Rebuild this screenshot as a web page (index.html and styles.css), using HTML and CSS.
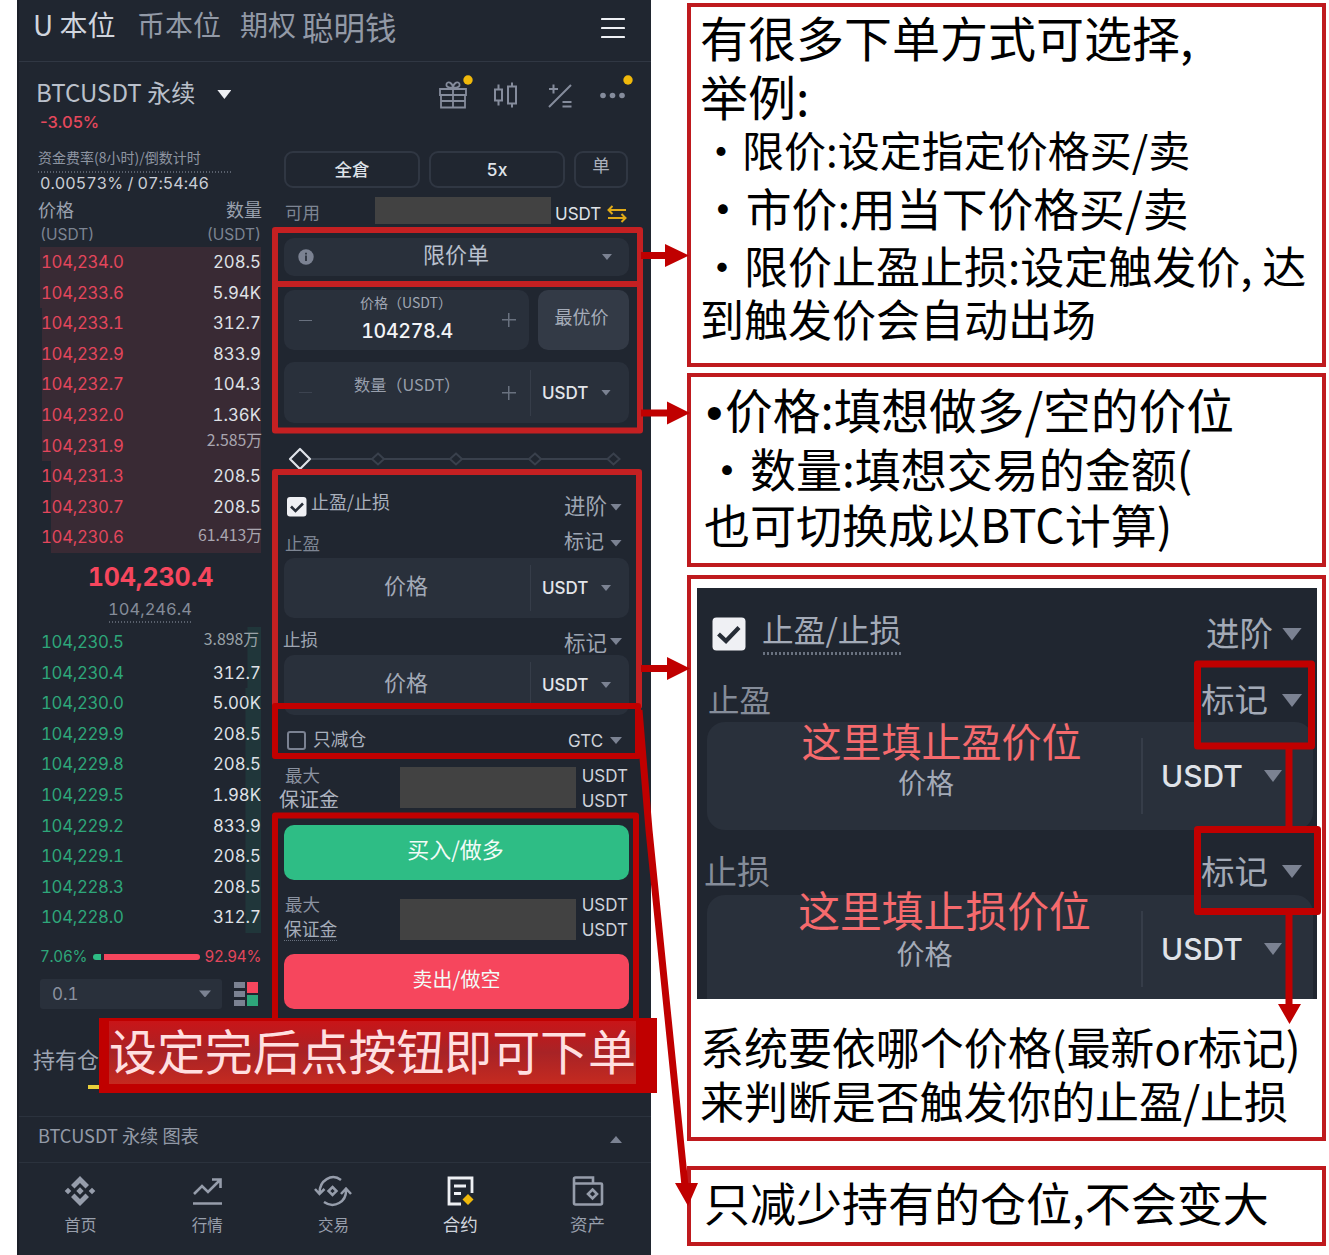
FILE: index.html
```html
<!DOCTYPE html>
<html lang="zh-CN">
<head>
<meta charset="utf-8">
<title>BTCUSDT 永续</title>
<link rel="stylesheet" href="styles.css">
</head>
<body>
<div class="page">
  <main class="phone">
    <header class="tabs">
      <span class="tab tab-on">U 本位</span><span class="tab tab-coin">币本位</span><span class="tab tab-opt">期权</span><span class="tab tab-smart">聪明钱</span>
      <svg class="menu" width="24" height="22" viewBox="0 0 24 22"><path d="M1 2h22M1 11h22M1 20h22" stroke="#eef0f4" stroke-width="2.2" stroke-linecap="round"/></svg>
    </header>

    <section class="pair">
      <div>
        <div class="pair-name">BTCUSDT 永续<i class="caret caret-white"></i></div>
        <div class="pair-change">-3.05%</div>
      </div>
      <div class="tools">
        <svg width="36" height="36" viewBox="0 0 36 36" fill="none" stroke="#858c9c" stroke-width="1.8"><path d="M4 15h26v6H4zM5 21v12.500h24V21M5 27h24M17 15v18M17 14c-6 0-7-2-6.500-4 1-3 6-2 6.500 4zM17 14c6 0 7-2 6.500-4-1-3-6-2-6.500 4z"/><circle cx="32" cy="6" r="4.700" fill="#f0b90b" stroke="none"/></svg>
        <svg width="26" height="28" viewBox="0 0 26 28" fill="none" stroke="#858c9c" stroke-width="2"><path d="M2 8.500h7v11H2zM5.500 3.500v5M5.500 19.500v5M15 5.500h8v17h-8zM19 1.500v4M19 22.500v4"/></svg>
        <svg width="26" height="26" viewBox="0 0 26 26" fill="none" stroke="#858c9c" stroke-width="2"><path d="M2 24 24 2M2 6h9M6.500 1.500v9M15.500 19h9M15.500 23.500h9"/></svg>
        <svg width="36" height="36" viewBox="0 0 36 36" fill="#858c9c"><circle cx="4" cy="21.500" r="2.800"/><circle cx="13.500" cy="21.500" r="2.800"/><circle cx="23" cy="21.500" r="2.800"/><circle cx="29" cy="6" r="4.700" fill="#f0b90b"/></svg>
      </div>
    </section>

    <div class="trade">
      <section class="book">
        <div class="funding">资金费率(8小时)/倒数计时</div>
        <div class="rate">0.00573% / 07:54:46</div>
        <div class="row head"><span>价格</span><span>数量</span></div>
        <div class="row unit"><span>(USDT)</span><span>(USDT)</span></div>
        <div class="asks">
          <div class="row level"><span>104,234.0</span><b>208.5</b></div>
          <div class="row level"><span>104,233.6</span><b>5.94K</b></div>
          <div class="row level d2"><span>104,233.1</span><b>312.7</b></div>
          <div class="row level d2"><span>104,232.9</span><b>833.9</b></div>
          <div class="row level d2"><span>104,232.7</span><b>104.3</b></div>
          <div class="row level d2"><span>104,232.0</span><b>1.36K</b></div>
          <div class="row level d2"><span>104,231.9</span><b class="wan">2.585万</b></div>
          <div class="row level d3"><span>104,231.3</span><b>208.5</b></div>
          <div class="row level d3"><span>104,230.7</span><b>208.5</b></div>
          <div class="row level d3"><span>104,230.6</span><b class="wan wan-low">61.413万</b></div>
        </div>
        <div class="last">104,230.4</div>
        <div class="mark"><span>104,246.4</span></div>
        <div class="bids">
          <div class="row level d4"><span>104,230.5</span><b class="wan wan-bid">3.898万</b></div>
          <div class="row level d4"><span>104,230.4</span><b>312.7</b></div>
          <div class="row level"><span>104,230.0</span><b>5.00K</b></div>
          <div class="row level"><span>104,229.9</span><b>208.5</b></div>
          <div class="row level"><span>104,229.8</span><b>208.5</b></div>
          <div class="row level"><span>104,229.5</span><b>1.98K</b></div>
          <div class="row level"><span>104,229.2</span><b>833.9</b></div>
          <div class="row level"><span>104,229.1</span><b>208.5</b></div>
          <div class="row level"><span>104,228.3</span><b>208.5</b></div>
          <div class="row level"><span>104,228.0</span><b>312.7</b></div>
        </div>
        <div class="ratio"><span class="up">7.06%</span><i class="bar-up"></i><i class="bar-down"></i><span class="down">92.94%</span></div>
        <div class="step">
          <div class="step-box"><span>0.1</span><i class="caret"></i></div>
          <svg width="24" height="24" viewBox="0 0 24 24"><path d="M0 0h11v6H0zM0 9h11v6H0zM0 18h11v6H0z" fill="#7b8292"/><path d="M13 0h11v11H13z" fill="#f6465d"/><path d="M13 13h11v11H13z" fill="#2ea67a"/></svg>
        </div>
      </section>

      <section class="form">
        <div class="modes"><span class="mode">全倉</span><span class="mode">5x</span><span class="mode mode-one">单</span></div>
        <div class="avail"><span class="lbl">可用</span><i class="mask"></i><span class="cur">USDT</span>
          <svg width="20" height="18" viewBox="0 0 20 18" fill="none" stroke="#e0aa17" stroke-width="2"><path d="M19 5H1.500M5.500 1 1.500 5l4 4M1 13h17.500M14.500 9l4 4-4 4"/></svg></div>
        <div class="field type"><svg width="16" height="16" viewBox="0 0 16 16"><circle cx="8" cy="8" r="7.700" fill="#7b8292"/><path d="M8 6.500v5.500M8 3.800v1.600" stroke="#2b313c" stroke-width="1.800"/></svg><span>限价单</span><i class="caret small"></i></div>
        <div class="price-row">
          <div class="field price"><i class="minus"></i><div class="price-in"><span class="price-lbl">价格（USDT）</span><span class="price-val">104278.4</span></div><i class="plus"></i></div>
          <div class="field best">最优价</div>
        </div>
        <div class="field qty"><i class="minus dim"></i><span class="qty-lbl">数量（USDT）</span><i class="plus"></i><div class="unit-pick"><span>USDT</span><i class="caret small"></i></div></div>
        <svg class="slider" width="345" height="72" viewBox="0 0 345 72" fill="#202630" stroke="#39404c" stroke-width="2"><path d="M16 36h313"/><path d="m94 30.500 6 5.500-6 5.500-6-5.500zM172 30.500l6 5.500-6 5.500-6-5.500zM251 30.500l6 5.500-6 5.500-6-5.500zM329.500 30.500l6 5.500-6 5.500-6-5.500z"/><path d="m16 26 10 10-10 10L6 36z" stroke="#dfe2e8" stroke-width="2.200" stroke-linejoin="round"/></svg>
        <div class="opt opt-tpsl">
          <svg width="20" height="20" viewBox="0 0 20 20"><rect width="19.500" height="19.500" rx="3" fill="#eff0f4"/><path d="m4 9.500 4.500 4.500L16 6.500" fill="none" stroke="#262c36" stroke-width="2.600"/></svg>
          <span class="opt-name">止盈/止损</span><span class="pick">进阶</span><i class="caret"></i></div>
        <div class="opt opt-tp"><span class="lbl">止盈</span><span class="pick pick-tp">标记</span><i class="caret"></i></div>
        <div class="field trigger"><span>价格</span><div class="unit-pick"><span>USDT</span><i class="caret small"></i></div></div>
        <div class="opt opt-sl"><span class="lbl lbl-sl">止损</span><span class="pick">标记</span><i class="caret"></i></div>
        <div class="field trigger"><span>价格</span><div class="unit-pick"><span>USDT</span><i class="caret small"></i></div></div>
        <div class="opt opt-reduce">
          <i class="box"></i><span class="opt-name">只减仓</span><span class="gtc">GTC</span><i class="caret"></i></div>
        <div class="limits"><div class="names"><span>最大</span><span class="margin margin-big">保证金</span></div><i class="mask mask-tall"></i><div class="units"><span>USDT</span><span>USDT</span></div></div>
        <div class="action buy">买入/做多</div>
        <div class="limits limits-sell"><div class="names"><span>最大</span><span class="margin">保证金</span></div><i class="mask mask-tall"></i><div class="units"><span>USDT</span><span>USDT</span></div></div>
        <div class="action sell">卖出/做空</div>
      </section>
    </div>

    <div class="positions"><span>持有仓</span><i></i></div>
    <div class="chart-bar"><span>BTCUSDT 永续 图表</span><i class="caret caret-up"></i></div>
    <nav class="nav">
      <div class="nav-item"><svg width="34" height="34" viewBox="0 0 34 34" fill="#969dab"><path d="m17 2 9 9-3.500 3.500-5.500-5.500-5.500 5.500L8 11zM17 32l9-9-3.500-3.500-5.500 5.500-5.500-5.500L8 23zM17 13.300l3.700 3.700-3.700 3.700-3.700-3.700zM5 13.700 8.300 17 5 20.300 1.700 17zM29 13.700l3.300 3.300-3.300 3.300-3.300-3.300z"/></svg><span>首页</span></div>
      <div class="nav-item"><svg width="34" height="34" viewBox="0 0 34 34" fill="none" stroke="#969dab" stroke-width="2.600"><path d="m4 20 8-8 6 6L30 6M22 5.500h8.500V14M3 29.500h29"/></svg><span class="s15">行情</span></div>
      <div class="nav-item"><svg width="38" height="34" viewBox="0 0 38 34" fill="none" stroke="#969dab" stroke-width="2.500"><path d="M27 6C18-1 5 6 5.500 20M1 15l4.500 5 5-5M10 28c10 7 23 0 22-13M27 20l5-5.500 5 5.500M18.500 13l4 4-4 4-4-4z"/></svg><span class="s15">交易</span></div>
      <div class="nav-item"><svg width="34" height="34" viewBox="0 0 34 34" fill="none" stroke="#eef0f4" stroke-width="2.800"><path d="M29 19V4H6v26h12M11 12h12M11 19.500h7"/><path d="m25 20 5.500 5.500L25 31l-5.500-5.500z" fill="#f0b90b" stroke="none"/></svg><span class="s17 on">合约</span></div>
      <div class="nav-item"><svg width="34" height="34" viewBox="0 0 34 34" fill="none" stroke="#969dab" stroke-width="2.600"><path d="M3 11V5q0-1.500 1.500-1.500H22V9M3 9.500h27q1 0 1 1V29q0 1.500-1.500 1.500h-25Q3 30.500 3 29zM21.500 15.500l4.500 4.500-4.500 4.500L17 20z"/></svg><span class="s17">资产</span></div>
    </nav>
  </main>

  <aside class="notes">
    <section class="note note-type">
      <p class="l1">有很多下单方式可选择,</p><p class="l2">举例:</p><p class="l3">・限价:设定指定价格买/卖</p><p class="l4">・市价:用当下价格买/卖</p><p class="l5">・限价止盈止损:设定触发价, 达</p><p class="l6">到触发价会自动出场</p>
    </section>
    <section class="note note-price">
      <p class="p1"><span>•</span>价格:填想做多/空的价位</p><p class="p2">・数量:填想交易的金额(</p><p class="p3">也可切换成以BTC计算)</p>
    </section>
    <section class="note note-tpsl">
      <div class="shot">
        <div class="shot-head">
          <svg width="34" height="34" viewBox="0 0 34 34"><rect x=".5" y=".5" width="33" height="33" rx="4" fill="#eff0f4"/><path d="m6.500 17 7.500 7L27 10.500" fill="none" stroke="#262c36" stroke-width="4.200"/></svg>
          <span class="shot-title">止盈/止损</span><span class="shot-pick">进阶</span><i class="caret big"></i></div>
        <div class="shot-line"><span>止盈</span><span class="shot-pick">标记</span><i class="caret big"></i></div>
        <div class="shot-field"><div class="shot-in"><em>这里填止盈价位</em><span>价格</span></div><div class="shot-unit"><span>USDT</span><i class="caret mid"></i></div></div>
        <div class="shot-line shot-line-sl"><span>止损</span><span class="shot-pick">标记</span><i class="caret big"></i></div>
        <div class="shot-field shot-cut"><div class="shot-in"><em>这里填止损价位</em><span>价格</span></div><div class="shot-unit"><span>USDT</span><i class="caret mid"></i></div></div>
      </div>
      <p class="t1">系统要依哪个价格(最新or标记)</p><p class="t2">来判断是否触发你的止盈/止损</p>
    </section>
    <section class="note note-reduce"><p>只减少持有的仓位,不会变大</p></section>
  </aside>

  <svg class="marks" width="1329" height="1255" viewBox="0 0 1329 1255" fill="none" stroke-linejoin="round">
    <g stroke="#c42022" stroke-width="6"><path d="M275 230h365v54H275z"/><path d="M275 284h365v146.500H275z"/><path d="M275 472h364v234H275z"/></g>
    <g stroke="#c00000" stroke-width="6"><path d="M275 706h363v50H275z"/><path d="M275 815.500h361V1021H275z"/></g>
    <g stroke="#c00000" stroke-width="7"><path d="M641 255.500h26M641 413h26M641 668.500h26M639 710l10 120 36 356" /><path d="M1197.500 664h114v82h-114z"/><path d="M1197.500 829.500h120v82h-120z"/><path d="M1289 749v80M1289 912v94"/></g>
    <g fill="#c00000"><path d="M665 244l24 11.500-24 11.500zM667 401.500l23 11.500-23 11.500zM667 657l23 11.500-23 11.500zM675 1183h23l-10 23zM1278 1004h23l-11.500 20z"/></g>
  </svg>
  <div class="banner"><span>设定完后点按钮即可下单</span></div>
</div>
</body>
</html>
```
FILE: styles.css
```css
* { box-sizing: border-box; }
body { margin: 0; background: #fff; }
p { margin: 0; }
i, em { font-style: normal; }
b { font-weight: 400; }
svg { display: block; flex: none; }

.page {
  position: relative;
  display: flex;
  width: 1329px;
  height: 1255px;
  overflow: hidden;
  padding-left: 17px;
  white-space: nowrap;
  font-family: "Noto Sans CJK SC", sans-serif;
  color: #b4bac6;
}
.phone { width: 634px; height: 1255px; background: #202630; flex: none; border-left: 2px solid #1a1f28; display: flex; flex-direction: column; }

.caret { display: block; flex: none; width: 12px; height: 7px; background: #7b8292; clip-path: polygon(0 0, 100% 0, 50% 100%); }
.caret.small { width: 10px; height: 6px; }
.caret.mid { width: 18px; height: 12px; }
.caret.big { width: 20px; height: 13px; }
.caret-white { width: 14px; height: 9px; background: #eef0f4; }
.caret-up { clip-path: polygon(50% 0, 100% 100%, 0 100%); }

/* top tabs */
.tabs { display: flex; height: 62px; padding-left: 14px; border-bottom: 1px solid #303743; line-height: 49px; color: #9299a6; flex: none; }
.tab-on { width: 104px; font-size: 28px; color: #d0d5de; }
.tab-coin { width: 103px; font-size: 28px; }
.tab-opt { width: 62px; font-size: 28px; }
.tab-smart { width: 299px; font-size: 31.5px; line-height: 53px; }
.menu { margin-top: 17px; }

/* pair line */
.pair { display: flex; justify-content: space-between; height: 83px; padding: 12px 25px 0 17px; flex: none; }
.pair-name { display: flex; align-items: center; height: 34px; font-size: 24.1px; color: #bac0cb; }
.pair-name .caret { margin-left: 22px; margin-top: 7px; }
.pair-change { height: 26px; padding-left: 4px; font: 500 16.5px/28px Inter, sans-serif; color: #e5485c; }
.tools { display: flex; height: 36px; }
.tools svg { overflow: visible; }
.tools svg:nth-child(1) { margin-right: 21px; }
.tools svg:nth-child(2) { margin: 7px 28px 0 0; }
.tools svg:nth-child(3) { margin: 9px 26px 0 0; }
.tools svg:nth-child(4) { margin-right: -9px; }

.trade { display: flex; height: 865px; padding-left: 19px; flex: none; }

/* order book */
.book { width: 246px; padding-right: 22px; font-variant-numeric: tabular-nums; }
.funding { height: 28px; width: 194px; font-size: 14px; line-height: 24px; color: #8e95a2; background: radial-gradient(circle, #59606c 45%, transparent 50%) 2px 26px / 3px 2px repeat-x; }
.rate { height: 20px; padding-left: 2px; font-family: Inter, sans-serif; font-size: 16.2px; line-height: 20px; color: #c9cdd5; letter-spacing: -.02px; }
.row { display: flex; justify-content: space-between; }
.head { height: 34px; line-height: 33px; font-size: 18px; color: #9aa1ae; }
.unit { height: 20px; padding: 0 1px 0 2px; font-family: Inter, sans-serif; font-size: 15.5px; line-height: 16px; color: #7c8492; }
.level { height: 30.6px; margin: 0 1px 0 2px; padding: 0 1px; font-family: Inter, sans-serif; font-size: 16.8px; line-height: 30.6px; color: #2ea67a; }
.level > span { letter-spacing: -.3px; }
.level b { color: #dfe1e6; }
.level b:not(.wan) { margin-right: -1px; }
.asks .level { color: #e3465c; background: #392a34; }
.asks .d2 { background: linear-gradient(#392a34 0 0) 2px 0 no-repeat; }
.asks .d3 { background: linear-gradient(#392a34 0 0) 11px 0 no-repeat; }
.level .wan { font-family: "Noto Sans CJK SC", sans-serif; font-size: 15.8px; line-height: 17px; color: #a9a6b0; margin-right: -2px; }
.level .wan-low { padding-top: 4px; }
.level .wan-bid { margin-right: 1px; padding-top: 3px; color: #9aa3a9; }
.last { height: 50px; font-family: Inter, sans-serif; font-size: 25px; font-weight: 700; line-height: 49px; letter-spacing: -.1px; padding-left: 1px; text-align: center; color: #f6465d; }
.mark { height: 24px; text-align: center; font-family: Inter, sans-serif; font-size: 16.5px; line-height: 13px; color: #858c99; }
.mark span { display: inline-block; height: 20px; background: radial-gradient(circle, #59606c 45%, transparent 50%) 0 18px / 3px 2px repeat-x; }
.bids .level { background: linear-gradient(90deg, transparent 205px, #20363a 206px); }
.bids .d4 { background: linear-gradient(90deg, transparent 207px, #20363a 208px); }
.ratio { display: flex; align-items: center; height: 46px; padding: 3px 1px 0 2px; font-family: Inter, sans-serif; font-size: 15.2px; line-height: 20px; letter-spacing: -.3px; }
.up { color: #2ea67a; width: 53px; }
.down { color: #e3465c; margin-left: auto; }
.bar-up { width: 8px; height: 6px; background: #2ebd85; border-radius: 3px 0 0 3px; margin-right: 3px; }
.bar-down { width: 96px; height: 6px; background: #f6465d; border-radius: 0 3px 3px 0; }
.step { display: flex; align-items: center; height: 30px; padding-left: 2px; gap: 12px; }
.step-box { display: flex; align-items: center; justify-content: space-between; width: 182px; height: 30px; padding: 0 11px 0 12px; background: #29303b; border-radius: 3px; font-family: Inter, sans-serif; font-size: 17px; line-height: 30px; color: #8b92a0; }

/* order form */
.form { width: 345px; padding-top: 6px; font-variant-numeric: tabular-nums; }
.modes { display: flex; gap: 9px; height: 37px; margin-bottom: 1px; }
.mode { width: 136px; height: 37px; border: 2px solid #303743; border-radius: 9px; text-align: center; font-family: Inter, "Noto Sans CJK SC", sans-serif; font-size: 17.5px; line-height: 33px; font-weight: 500; color: #dfe2e8; }
.mode-one { width: 54px; font-family: "Noto Sans CJK SC", sans-serif; font-size: 17.5px; font-weight: 400; line-height: 24px; color: #aab0bd; }
.avail { display: flex; align-items: center; height: 49px; }
.lbl { font-size: 17.5px; color: #7d8593; }
.avail .lbl { width: 91px; padding-left: 1px; margin-top: -4px; }
.mask { display: block; width: 176px; height: 27px; background: #424242; margin: -7px 4px 0 0; }
.cur { width: 52px; font: 400 17px/20px Inter, sans-serif; color: #dfe2e8; }
.field { background: #29303b; border-radius: 10px; display: flex; align-items: center; }
.type { height: 38px; padding: 0 17px 0 14px; justify-content: space-between; font-size: 22px; line-height: 30px; color: #b9c1ce; margin-bottom: 14px; }
.type span { margin: -9px 0 0 -4px; }
.price-row { display: flex; gap: 9px; height: 60px; margin-bottom: 12px; }
.price { width: 245px; padding: 0 13px 0 15px; justify-content: space-between; }
.best { width: 91px; justify-content: center; background: #333a46; font-size: 18px; color: #a5acb9; padding: 0 4px 8px 0; }
.minus { width: 13px; height: 1px; background: #69717f; }
.minus.dim { background: #3c4350; }
.plus { flex: none; width: 14px; height: 14px; background: linear-gradient(#69717f 0 0) center / 14px 1.500px no-repeat, linear-gradient(#69717f 0 0) center / 1.500px 14px no-repeat; }
.price-in { display: flex; flex-direction: column; align-items: center; margin-top: -4px; }
.price-lbl { font-size: 14px; line-height: 22px; margin-left: -2px; color: #a0a7b4; }
.price-val { font-family: Inter, sans-serif; font-size: 19.6px; line-height: 30px; letter-spacing: -.3px; font-weight: 500; color: #f3f4f7; margin-top: 3px; }
.qty { height: 61px; padding-left: 15px; }
.qty-lbl { width: 190px; padding-bottom: 18px; padding-left: 42px; font-size: 16.2px; color: #989fac; }
.unit-pick { display: flex; align-items: center; justify-content: space-between; width: 99px; height: 46px; margin-left: auto; padding: 0 18px 0 11px; border-left: 1px solid #363d49; font: 500 17px/20px Inter, sans-serif; color: #e3e5ea; }
.opt { display: flex; align-items: center; padding-right: 7px; }
.opt .pick, .gtc { margin-left: auto; }
.pick { font-size: 21.5px; line-height: 24px; color: #9ea5b2; width: 46px; }
.opt-name { font-size: 18px; line-height: 20px; color: #a9b0bd; }
.opt-tpsl { height: 24px; padding-left: 3px; }
.opt-tpsl .opt-name { margin: -12px 0 0 4px; }
.opt-tpsl .pick { margin-top: -4px; }
.opt-tp { height: 39px; padding-top: 9px; }
.opt-tp .pick-tp { font-size: 20px; margin-top: -4px; }
.opt-tp .lbl { margin: -2px 0 0 1px; }
.trigger { height: 60px; }
.trigger > span { width: 244px; text-align: center; font-size: 22px; color: #a3aab7; padding-bottom: 8px; }
.opt-sl { height: 37px; padding-top: 10px; }
.lbl-sl { margin: -6px 0 0 -1px; color: #9ea5b2; }
.opt-reduce { height: 51px; padding-left: 3px; }
.opt-reduce .opt-name { margin: -5px 0 0 7px; font-size: 17.7px; }
.box { width: 19px; height: 19px; border: 2px solid #7b8292; border-radius: 3px; }
.gtc { width: 42px; font: 400 17px/20px Inter, sans-serif; color: #cfd3db; }
.limits { display: flex; height: 50px; }
.names { display: flex; flex-direction: column; width: 116px; font-size: 17.5px; line-height: 18px; color: #8b92a0; }
.names > span { padding-left: 1px; }
.margin { font-size: 18px; line-height: 27px; color: #a5acb9; }
.names .margin-big { font-size: 20px; margin: 1px 0 0 -6px; color: #aeb4c1; }
.mask-tall { height: 41px; margin: 1px 0 0; }
.units { margin-left: auto; padding-right: 1px; display: flex; flex-direction: column; font: 400 17px/24.5px Inter, sans-serif; color: #cfd3db; margin-top: -2px; }
.action { border-radius: 10px; text-align: center; color: #f2fbf7; }
.buy { height: 55px; margin: 9px 0 15px; background: #2ebd85; font-size: 22px; line-height: 46px; padding-right: 2px; }
.limits-sell { height: 48px; margin-bottom: 11px; }
.limits-sell .mask-tall { margin-top: 4px; }
.limits-sell .names .margin { align-self: flex-start; height: 28px; padding: 0; line-height: 30px; font-size: 17.8px; border-bottom: 1px dotted #69717f; }
.sell { height: 55px; background: #f6465d; font-size: 20px; line-height: 50px; }

/* lower bars */
.positions { height: 107px; padding: 33px 0 0 14px; font-size: 22px; line-height: 30px; color: #9ea5b2; border-bottom: 1px solid #2b323d; flex: none; }
.positions i { display: block; height: 4px; width: 14px; margin: 12px 0 0 55px; background: #e8cf3a; }
.chart-bar { display: flex; align-items: center; justify-content: space-between; height: 46px; padding: 0 29px 0 19px; border-bottom: 1px solid #2b323d; font-size: 18.2px; color: #939aa7; flex: none; }
.chart-bar span { margin-top: -9px; }
.nav { display: flex; margin-left: -2px; padding-top: 11px; }
.nav-item { width: 127px; display: flex; flex-direction: column; align-items: center; font-size: 16px; line-height: 24px; gap: 4px; color: #989fac; }
.nav-item:nth-child(3), .nav-item:nth-child(4) { padding-right: 1px; }
.s15 { font-size: 15.5px; }
.s17 { font-size: 17.5px; }
.on { color: #d0d5de; }

/* explanations */
.notes { display: flex; flex-direction: column; margin-left: 36px; padding-top: 3px; width: 639px; flex: none; color: #000; }
.note { border: 4px solid #bf1a1e; padding-left: 9px; flex: none; }
.note-type { height: 364px; margin-bottom: 6px; }
.l1 { font-size: 48px; line-height: 61px; margin-top: -1px; }
.l2 { font-size: 48px; line-height: 56px; }
.l3 { font-size: 42px; line-height: 52px; }
.l4 { font-size: 45.8px; line-height: 64px; }
.l5 { font-size: 44px; line-height: 52px; }
.l6 { font-size: 44px; line-height: 55px; }
.note-price { height: 194px; margin-bottom: 8px; }
.p1 { font-size: 47.7px; line-height: 64px; padding-left: 6px; }
.p1 span { display: inline-block; width: 19px; font-family: "Liberation Sans", sans-serif; line-height: 40px; }
.p2 { font-size: 46px; line-height: 53px; padding-left: 4px; }
.p3 { font-size: 46px; line-height: 59px; padding-left: 4px; }
.note-tpsl { height: 566px; margin-bottom: 25px; padding-top: 9px; }
.shot { width: 620px; height: 411px; margin-left: -3px; background: #202630; color: #a3aab7; overflow: hidden; }
.shot-head { display: flex; align-items: center; height: 92px; padding: 0 15px 0 15px; }
.shot-title { margin: -4px 0 0 16px; font-size: 31.7px; line-height: 37px; height: 45px; background: radial-gradient(circle, #69717f 45%, transparent 50%) 0 42px / 4px 3px repeat-x; }
.shot-pick { margin-left: auto; width: 76px; font-size: 33.5px; line-height: 40px; margin-top: -5px; }
.shot-line { display: flex; align-items: center; height: 41px; padding: 0 15px 0 11px; margin-bottom: 1px; font-size: 31.5px; line-height: 40px; color: #858c99; }
.shot-line > span:first-child { margin-top: -6px; }
.shot-line .shot-pick { color: #a3aab7; width: 81px; margin-top: -6px; }
.shot-field { display: flex; height: 108px; margin: 0 4px 0 10px; background: #29303b; border-radius: 18px; }
.shot-in { width: 434px; flex: none; display: flex; flex-direction: column; align-items: center; padding-left: 35px; }
.shot-in em { font-size: 40px; line-height: 40px; margin-top: -2px; color: #f56a6d; }
.shot-in span { font-size: 28px; line-height: 40px; margin: 2px 0 0 -31px; }
.shot-unit { display: flex; align-items: center; justify-content: space-between; flex: 1; height: 76px; margin-top: 16px; padding: 0 31px 0 18px; border-left: 2px solid #363d49; font: 500 30px/40px Inter, sans-serif; color: #dfe2e8; }
.shot-line-sl { height: 64px; padding: 19px 15px 0 7px; font-size: 33px; }
.shot-line-sl > span:first-child { margin-top: -3px; }
.shot-line-sl .shot-pick { margin-top: -3px; }
.shot-cut { height: 120px; }
.shot-cut .shot-in em { font-size: 41.8px; line-height: 42px; margin-top: -7px; padding-left: 6px; }
.shot-cut .shot-in span { margin: 3px 0 0 -34px; }
.t1 { font-size: 44px; line-height: 54px; padding-top: 20px; letter-spacing: -.05px; }
.t2 { font-size: 44px; line-height: 54px; letter-spacing: -.1px; }
.note-reduce { height: 80px; font-size: 46px; line-height: 63px; padding-left: 13px; }

/* red callouts over the page */
.marks { position: absolute; left: 0; top: 0; }
.banner { position: absolute; left: 99px; top: 1018px; width: 558px; height: 75px; padding: 3px 0 0 10px; background: #c00000; color: #ffdfe0; font-size: 48px; }
.banner span { display: block; width: 527px; height: 63px; line-height: 56px; letter-spacing: -.1px; background: linear-gradient(#c91518, #a82326 50%, #c52a20); }
```
